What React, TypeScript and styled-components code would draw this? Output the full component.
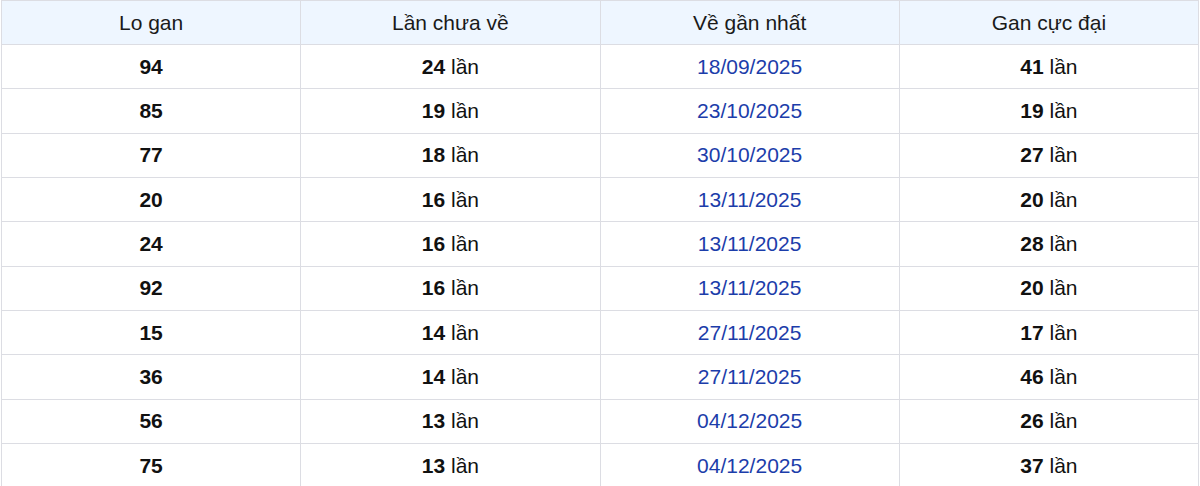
import React from "react";
import styled, { createGlobalStyle } from "styled-components";

const Global = createGlobalStyle`
  html, body { margin: 0; padding: 0; background: #ffffff; }
  body { font-family: "Liberation Sans", Arial, sans-serif; }
`;

const Wrap = styled.div`
  padding: 0 1px 0 1px;
`;

const Table = styled.table`
  width: 100%;
  border-collapse: collapse;
  table-layout: fixed;
  font-family: "Liberation Sans", Arial, sans-serif;
  font-size: 21px;
  color: #111111;
`;

const HeadCell = styled.th`
  background: #eef6ff;
  border: 1px solid #dcdde3;
  font-weight: 400;
  height: 43px;
  padding: 0;
  text-align: center;
  vertical-align: middle;
  color: #1a1a1a;
`;

const Cell = styled.td<{ $blue?: boolean }>`
  border: 1px solid #dcdde3;
  height: 43.33px;
  padding: 0;
  text-align: center;
  vertical-align: middle;
  color: ${(p) => (p.$blue ? "#1c3daa" : "#111111")};
`;

const Num = styled.b`
  font-weight: 700;
`;

const rows: [string, string, string, string][] = [
  ["94", "24", "18/09/2025", "41"],
  ["85", "19", "23/10/2025", "19"],
  ["77", "18", "30/10/2025", "27"],
  ["20", "16", "13/11/2025", "20"],
  ["24", "16", "13/11/2025", "28"],
  ["92", "16", "13/11/2025", "20"],
  ["15", "14", "27/11/2025", "17"],
  ["36", "14", "27/11/2025", "46"],
  ["56", "13", "04/12/2025", "26"],
  ["75", "13", "04/12/2025", "37"],
];

export default function App() {
  return (
    <Wrap>
      <Global />
      <Table>
        <thead>
          <tr>
            <HeadCell>Lo gan</HeadCell>
            <HeadCell>Lần chưa về</HeadCell>
            <HeadCell>Về gần nhất</HeadCell>
            <HeadCell>Gan cực đại</HeadCell>
          </tr>
        </thead>
        <tbody>
          {rows.map((r, i) => (
            <tr key={i}>
              <Cell>
                <Num>{r[0]}</Num>
              </Cell>
              <Cell>
                <Num>{r[1]}</Num> lần
              </Cell>
              <Cell $blue>{r[2]}</Cell>
              <Cell>
                <Num>{r[3]}</Num> lần
              </Cell>
            </tr>
          ))}
        </tbody>
      </Table>
    </Wrap>
  );
}
